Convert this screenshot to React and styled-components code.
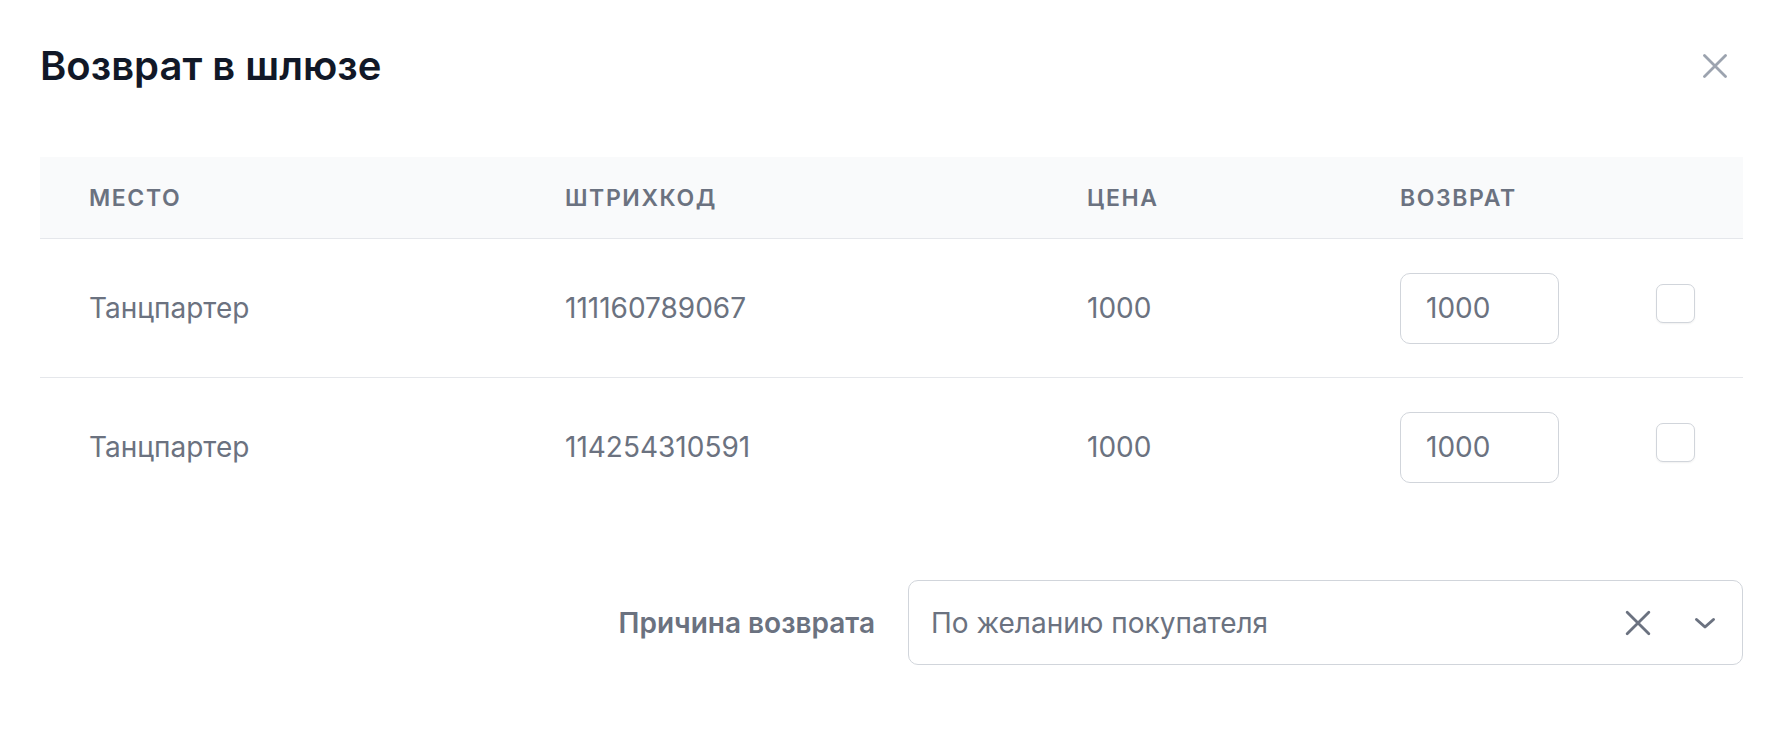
import React from "react";
import styled, { createGlobalStyle } from "styled-components";

const GlobalStyle = createGlobalStyle`
  body {
    margin: 0;
    background: #ffffff;
    font-family: Inter, "Noto Sans", sans-serif;
    -webkit-font-smoothing: antialiased;
  }
`;

// column widths shared by the header and the body rows
const columns = "476px 522px 313px 256px 1fr";

const Modal = styled.div`
  padding: 40px 43px 0 40px;
`;

const Header = styled.div`
  display: flex;
  align-items: center;
  justify-content: space-between;
  height: 52px;
`;

const Title = styled.h2`
  margin: 0;
  font-size: 40px;
  line-height: 52px;
  font-weight: 600;
  color: #111827;
`;

const CloseButton = styled.button`
  display: flex;
  align-items: center;
  justify-content: center;
  width: 40px;
  height: 40px;
  margin-right: 8px;
  padding: 0;
  border: 0;
  background: none;
  color: #9ca3af;
  cursor: pointer;
`;

const Table = styled.div`
  margin-top: 65px;
`;

const HeadRow = styled.div`
  display: grid;
  grid-template-columns: ${columns};
  align-items: center;
  height: 81px;
  background: #f9fafb;
  border-bottom: 1px solid #e5e7eb;
`;

const HeadCell = styled.div`
  padding-left: 49px;
  font-size: 23px;
  font-weight: 600;
  letter-spacing: 0.07em;
  text-transform: uppercase;
  color: #6b7280;
`;

const Row = styled.div`
  display: grid;
  grid-template-columns: ${columns};
  align-items: center;
  height: 138px;

  & + & {
    border-top: 1px solid #e5e7eb;
  }
`;

const Cell = styled.div`
  padding-left: 49px;
  font-size: 28px;
  color: #6b7280;
`;

const AmountInput = styled.input`
  box-sizing: border-box;
  width: 159px;
  height: 71px;
  margin-left: 49px;
  padding: 0 25px;
  border: 1.5px solid #d1d5db;
  border-radius: 10px;
  font-family: inherit;
  font-size: 28px;
  color: #6b7280;
  outline: none;
`;

const CheckBox = styled.span`
  display: block;
  box-sizing: border-box;
  width: 39px;
  height: 39px;
  margin-left: 49px;
  margin-top: -9px;
  border: 1.5px solid #d1d5db;
  border-radius: 7px;
  box-shadow: 0 1px 2px rgba(0, 0, 0, 0.06);
  background: #fff;
`;

const Footer = styled.div`
  display: flex;
  align-items: center;
  justify-content: flex-end;
  gap: 33px;
  margin-top: 64px;
`;

const Label = styled.span`
  font-size: 28px;
  font-weight: 600;
  color: #6b7280;
`;

const Select = styled.div`
  box-sizing: border-box;
  display: flex;
  align-items: center;
  width: 835px;
  height: 85px;
  padding: 0 25px 0 22px;
  border: 1.5px solid #d1d5db;
  border-radius: 10px;
`;

const SelectValue = styled.span`
  flex: 1;
  font-size: 28px;
  color: #6b7280;
`;

const SelectIcon = styled.span`
  display: flex;
  color: #6b7280;
  margin-left: ${(p) => p.$gap || 0}px;
`;

const rows = [
  { place: "Танцпартер", code: "111160789067", price: "1000" },
  { place: "Танцпартер", code: "114254310591", price: "1000" },
];

const XIcon = ({ size, stroke, inset = 1 }) => (
  <svg width={size} height={size} viewBox="0 0 24 24" fill="none">
    <path
      d={`M${inset} ${inset}L${24 - inset} ${24 - inset}M${24 - inset} ${inset}L${inset} ${24 - inset}`}
      stroke="currentColor"
      strokeWidth={stroke}
      strokeLinecap="round"
    />
  </svg>
);

const Chevron = () => (
  <svg width="24" height="24" viewBox="0 0 24 24" fill="none">
    <path
      d="M3.5 8.5l8.5 7.5 8.5-7.5"
      stroke="currentColor"
      strokeWidth="3"
      strokeLinecap="round"
      strokeLinejoin="round"
    />
  </svg>
);

export default function App() {
  return (
    <>
      <GlobalStyle />
      <Modal>
        <Header>
          <Title>Возврат в шлюзе</Title>
          <CloseButton aria-label="Закрыть">
            <XIcon size={24} stroke={2.8} inset={1.5} />
          </CloseButton>
        </Header>

        <Table>
          <HeadRow>
            <HeadCell>Место</HeadCell>
            <HeadCell>Штрихкод</HeadCell>
            <HeadCell>Цена</HeadCell>
            <HeadCell>Возврат</HeadCell>
            <HeadCell />
          </HeadRow>
          {rows.map((r) => (
            <Row key={r.code}>
              <Cell>{r.place}</Cell>
              <Cell>{r.code}</Cell>
              <Cell>{r.price}</Cell>
              <div>
                <AmountInput defaultValue={r.price} />
              </div>
              <div>
                <CheckBox />
              </div>
            </Row>
          ))}
        </Table>

        <Footer>
          <Label>Причина возврата</Label>
          <Select>
            <SelectValue>По желанию покупателя</SelectValue>
            <SelectIcon>
              <XIcon size={26} stroke={2.6} inset={2} />
            </SelectIcon>
            <SelectIcon $gap={42}>
              <Chevron />
            </SelectIcon>
          </Select>
        </Footer>
      </Modal>
    </>
  );
}
